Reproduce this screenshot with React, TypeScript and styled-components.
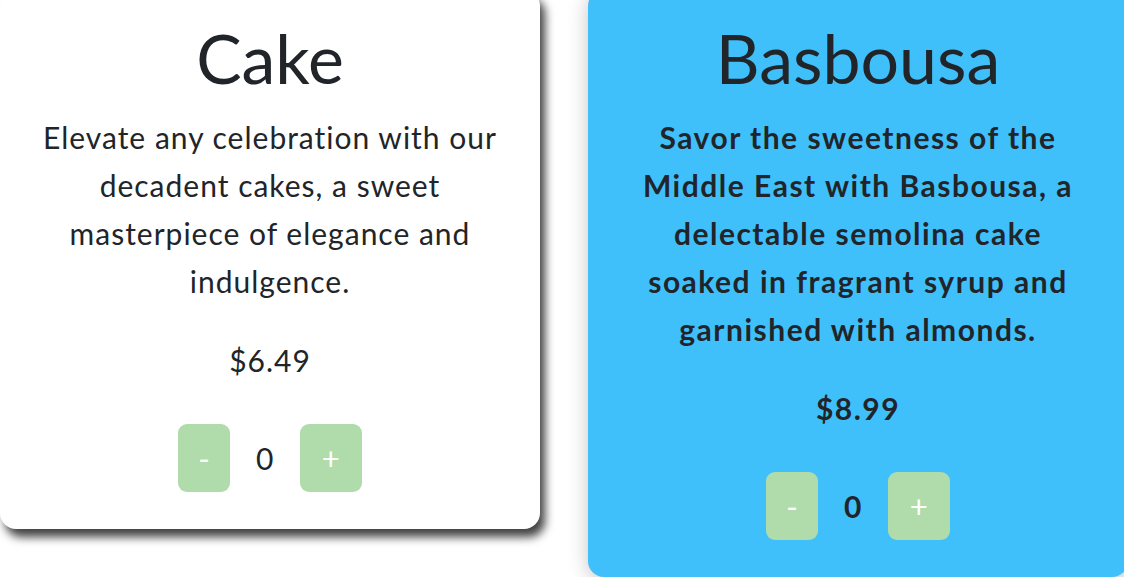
import React, { useState } from "react";
import styled, { createGlobalStyle, css } from "styled-components";

const GlobalStyle = createGlobalStyle`
  html, body {
    margin: 0;
    padding: 0;
    background: #ffffff;
    overflow: hidden;
  }
  body {
    font-family: Lato, "Noto Sans", "Open Sans", sans-serif;
    color: #212529;
  }
`;

const Row = styled.div`
  display: flex;
  align-items: flex-start;
  gap: 48px;
  margin-top: -10px;
`;

const Card = styled.div<{ $active?: boolean }>`
  flex: 0 0 540px;
  box-sizing: border-box;
  padding: 27px 36px 37px;
  border-radius: 16px;
  text-align: center;
  background: #ffffff;
  letter-spacing: 1px;
  box-shadow: 5px 8px 10px rgba(0, 0, 0, 0.75);
  ${(p) =>
    p.$active &&
    css`
      background: #40c0fb;
      box-shadow: 2px 3px 22px rgba(0, 0, 0, 0.28);
      font-weight: 700;
      letter-spacing: 1.5px;
    `}
`;

const Title = styled.h2`
  margin: 0;
  font-size: 68px;
  line-height: 82px;
  font-weight: 400;
  letter-spacing: 0;
`;

const Desc = styled.p`
  margin: 14px 0 0;
  font-size: 30px;
  line-height: 48px;
`;

const Price = styled.p`
  margin: 31px 0 0;
  font-size: 30px;
  line-height: 48px;
`;

const Controls = styled.div`
  margin-top: 40px;
  display: flex;
  justify-content: center;
  align-items: center;
  letter-spacing: 0;
`;

const QtyButton = styled.button<{ $pad: number }>`
  border: none;
  border-radius: 9px;
  background: #b0dbab;
  color: #ffffff;
  font-family: inherit;
  font-size: 31px;
  line-height: 36px;
  height: 68px;
  padding: 0 ${(p) => p.$pad}px;
  font-weight: 400;
  cursor: pointer;
`;

const Count = styled.span<{ $width: number }>`
  display: inline-block;
  width: ${(p) => p.$width}px;
  font-size: 30px;
  line-height: 48px;
  text-align: center;
`;

type Item = { name: string; desc: string; price: string; active?: boolean };

const items: Item[] = [
  {
    name: "Cake",
    desc: "Elevate any celebration with our decadent cakes, a sweet masterpiece of elegance and indulgence.",
    price: "$6.49",
  },
  {
    name: "Basbousa",
    desc: "Savor the sweetness of the Middle East with Basbousa, a delectable semolina cake soaked in fragrant syrup and garnished with almonds.",
    price: "$8.99",
    active: true,
  },
];

function ProductCard({ item }: { item: Item }) {
  const [qty, setQty] = useState(0);
  return (
    <Card $active={item.active}>
      <Title>{item.name}</Title>
      <Desc>{item.desc}</Desc>
      <Price>{item.price}</Price>
      <Controls>
        <QtyButton $pad={20} onClick={() => setQty((q) => Math.max(0, q - 1))}>-</QtyButton>
        <Count $width={70}>{qty}</Count>
        <QtyButton $pad={22} onClick={() => setQty((q) => q + 1)}>+</QtyButton>
      </Controls>
    </Card>
  );
}

export default function App() {
  return (
    <>
      <GlobalStyle />
      <Row>
        {items.map((it) => (
          <ProductCard key={it.name} item={it} />
        ))}
      </Row>
    </>
  );
}
